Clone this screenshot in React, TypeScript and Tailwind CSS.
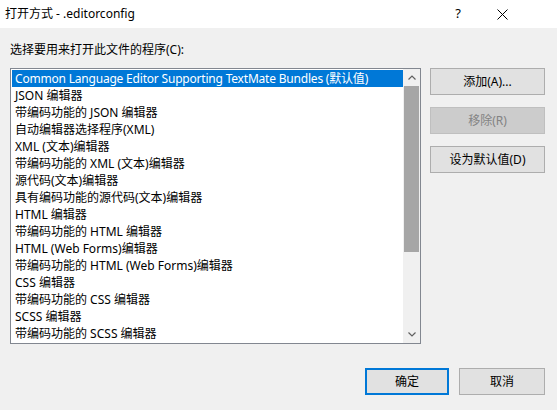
import React from 'react';

const items = [
  'Common Language Editor Supporting TextMate Bundles (默认值)',
  'JSON 编辑器',
  '带编码功能的 JSON 编辑器',
  '自动编辑器选择程序(XML)',
  'XML (文本)编辑器',
  '带编码功能的 XML (文本)编辑器',
  '源代码(文本)编辑器',
  '具有编码功能的源代码(文本)编辑器',
  'HTML 编辑器',
  '带编码功能的 HTML 编辑器',
  'HTML (Web Forms)编辑器',
  '带编码功能的 HTML (Web Forms)编辑器',
  'CSS 编辑器',
  '带编码功能的 CSS 编辑器',
  'SCSS 编辑器',
  '带编码功能的 SCSS 编辑器',
];

const font = "font-['Noto_Sans','Noto_Sans_CJK_SC',sans-serif]";

const Btn: React.FC<{ children: React.ReactNode; disabled?: boolean; primary?: boolean; className?: string }> = ({
  children,
  disabled,
  primary,
  className = '',
}) => (
  <div
    className={`flex items-center justify-center h-[27px] text-[12px] ${
      disabled
        ? 'bg-[#cccccc] border border-[#bfbfbf] text-[#838383]'
        : primary
        ? 'bg-[#e1e1e1] border-2 border-[#0078d7] text-black'
        : 'bg-[#e1e1e1] border border-[#adadad] text-black'
    } ${className}`}
  >
    {children}
  </div>
);

export default function App() {
  return (
    <div className={`w-[557px] h-[410px] bg-[#f0f0f0] flex flex-col ${font}`}>
      {/* title bar */}
      <div className="h-[28px] bg-white flex items-center pl-[5px] text-[12px] text-black">
        <span className="flex-1">打开方式 - .editorconfig</span>
        <span className="w-[20px] text-center text-[13px] mr-[29px]">?</span>
        <svg width="11" height="11" viewBox="0 0 11 11" className="mr-[49px]">
          <path d="M0.5 0.5L10.5 10.5M10.5 0.5L0.5 10.5" stroke="#000" strokeWidth="1" />
        </svg>
      </div>

      <div className="pl-[10px] pt-[14px] text-[12px] leading-[16px] h-[40px]">选择要用来打开此文件的程序(C):</div>

      <div className="flex pl-[10px]">
        {/* list box */}
        <div className="w-[411px] h-[276px] border border-[#828790] bg-white flex">
          <div className="flex-1 pl-[1px] pt-[1px]">
            {items.map((t, i) => (
              <div
                key={i}
                className={`h-[17px] leading-[17px] pl-[3px] text-[12px] whitespace-nowrap ${
                  i === 0 ? 'bg-[#0078d7] text-white tracking-[-0.2px]' : 'text-black'
                }`}
              >
                {t}
              </div>
            ))}
          </div>
          <div className="w-[17px] bg-[#f0f0f0] flex flex-col items-center">
            <div className="h-[17px] flex items-center justify-center">
              <svg width="8" height="5" viewBox="0 0 8 5">
                <path d="M0.5 4.5L4 1L7.5 4.5" stroke="#606060" strokeWidth="1.2" fill="none" />
              </svg>
            </div>
            <div className="w-[15px] h-[166px] bg-[#a6a6a6]" />
            <div className="flex-1" />
            <div className="h-[17px] flex items-center justify-center">
              <svg width="8" height="5" viewBox="0 0 8 5">
                <path d="M0.5 0.5L4 4L7.5 0.5" stroke="#606060" strokeWidth="1.2" fill="none" />
              </svg>
            </div>
          </div>
        </div>

        {/* side buttons */}
        <div className="ml-[9px] w-[115px] flex flex-col gap-[12px]">
          <Btn>添加(A)...</Btn>
          <Btn disabled>移除(R)</Btn>
          <Btn>设为默认值(D)</Btn>
        </div>
      </div>

      <div className="flex justify-end pr-[12px] pt-[24px] gap-[10px]">
        <Btn primary className="w-[84px]">确定</Btn>
        <Btn className="w-[86px]">取消</Btn>
      </div>
    </div>
  );
}
